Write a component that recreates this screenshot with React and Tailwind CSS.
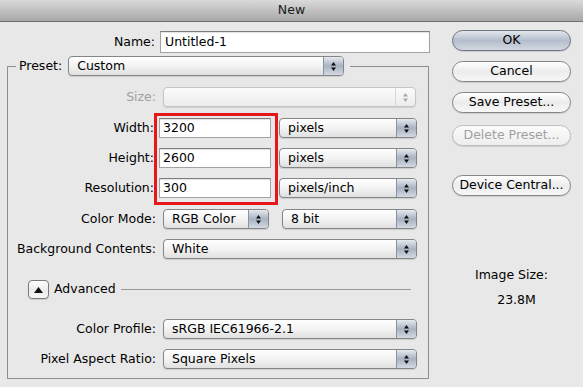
const Arrows = ({ color = "#111" }) => (
  <svg width="7" height="11" viewBox="0 0 7 11">
    <path d="M3.5 1 L6 4.5 H1 Z" fill={color} />
    <path d="M1 6.5 H6 L3.5 10 Z" fill={color} />
  </svg>
);

const Popup = ({ value, width, disabled }) => (
  <div
    className={`flex h-[20px] shrink-0 rounded-[4px] border shadow-[0_1px_1px_rgba(0,0,0,0.12)] ${
      disabled
        ? "border-[#c6c6c6] bg-gradient-to-b from-[#fbfbfb] to-[#ececec]"
        : "border-[#858585] bg-gradient-to-b from-white via-[#f3f3f3] to-[#e0e0e0]"
    }`}
    style={{ width }}
  >
    <span className="flex-1 truncate pl-[8px] leading-[18px]">{value}</span>
    {disabled ? (
      <span className="flex w-[20px] items-center justify-center border-l border-[#d6d6d6]">
        <Arrows color="#a8a8a8" />
      </span>
    ) : (
      <span className="flex w-[20px] items-center justify-center rounded-r-[3px] border-l border-[#8a93a1] bg-gradient-to-b from-[#e6eaf0] via-[#a8b2c1] to-[#d4dae3]">
        <Arrows />
      </span>
    )}
  </div>
);

const Field = ({ value, width, pad = "pl-[3px]" }) => (
  <div
    className={`h-[20px] shrink-0 border border-[#a3a3a3] border-t-[#7d7d7d] bg-white leading-[18px] shadow-[inset_0_1px_1px_rgba(0,0,0,0.12)] ${pad}`}
    style={{ width }}
  >
    {value}
  </div>
);

const Row = ({ label, dim, className = "", children }) => (
  <div className={`flex h-[20px] items-center ${className}`}>
    <span className={`w-[148px] shrink-0 text-right ${dim ? "text-[#a0a0a0]" : ""}`}>{label}</span>
    <div className="ml-[7px] flex items-center gap-[13px]">{children}</div>
  </div>
);

const Button = ({ children, primary, disabled, className = "" }) => (
  <div
    className={`flex h-[21px] w-[119px] items-center justify-center rounded-full border shadow-[0_1px_1px_rgba(0,0,0,0.12)] ${
      primary
        ? "border-[#6c7480] bg-gradient-to-b from-[#e3e7ed] via-[#b3bdcb] to-[#d2d8e1]"
        : disabled
        ? "border-[#bdbdbd] bg-gradient-to-b from-[#fbfbfb] to-[#eeeeee] text-[#a0a0a0]"
        : "border-[#858585] bg-gradient-to-b from-white via-[#ececec] to-[#f7f7f7]"
    } ${className}`}
  >
    {children}
  </div>
);

export default function App() {
  return (
    <div className="h-[387px] w-[583px] overflow-hidden bg-[#e8e8e8] font-['DejaVu_Sans',sans-serif] text-[12.5px] text-black">
      <div className="flex h-[22px] items-center justify-center border-b border-[#6f6f6f] bg-gradient-to-b from-[#dadada] to-[#a8a8a8] text-[12.5px] text-[#1a1a1a]">
        New
      </div>

      <div className="flex">
        <div className="pl-[7px]">
          <div className="mt-[9px] flex h-[22px] items-center">
            <span className="w-[148px] shrink-0 text-right">Name:</span>
            <span className="ml-[5px]">
              <Field value="Untitled-1" width={270} pad="pl-[4px] leading-[20px] h-[22px]" />
            </span>
          </div>

          <fieldset className="mt-[3px] w-[422px] border border-[#8f8f8f] pb-[9px]">
            <legend className="ml-[8px] flex items-center pl-[3px] pr-[6px]">
              <span>Preset:</span>
              <span className="ml-[6px]">
                <Popup value="Custom" width={276} />
              </span>
            </legend>

            <Row label="Size:" dim className="mt-[11px]">
              <Popup value="" width={253} disabled />
            </Row>

            <div className="mt-[6px] flex">
              <div className="flex w-[146px] shrink-0 flex-col gap-[10px] pt-[5px] text-right">
                <span className="leading-[20px]">Width:</span>
                <span className="leading-[20px]">Height:</span>
                <span className="leading-[20px]">Resolution:</span>
              </div>
              <div className="flex flex-col gap-[10px] border-[3px] border-[#e6161b] pt-[2px] pr-[4px] pb-[4px] pl-[2px]">
                <Field value="3200" width={112} />
                <Field value="2600" width={112} />
                <Field value="300" width={112} />
              </div>
              <div className="ml-[1px] flex flex-col gap-[10px] pt-[5px]">
                <Popup value="pixels" width={138} />
                <Popup value="pixels" width={138} />
                <Popup value="pixels/inch" width={138} />
              </div>
            </div>

            <Row label="Color Mode:" className="mt-[4px]">
              <Popup value="RGB Color" width={106} />
              <Popup value="8 bit" width={135} />
            </Row>

            <Row label="Background Contents:" className="mt-[10px]">
              <Popup value="White" width={254} />
            </Row>

            <div className="mt-[21px] flex h-[19px] items-center pl-[20px]">
              <div className="flex h-[19px] w-[21px] items-center justify-center rounded-[4px] border border-[#7a7a7a] bg-gradient-to-b from-white via-[#ececec] to-[#f5f5f5] shadow-[0_1px_1px_rgba(0,0,0,0.12)]">
                <svg width="9" height="6" viewBox="0 0 9 6">
                  <path d="M4.5 0 L9 6 H0 Z" fill="#111" />
                </svg>
              </div>
              <span className="ml-[5px]">Advanced</span>
              <div className="ml-[5px] mr-[17px] h-px flex-1 bg-[#9a9a9a]" />
            </div>

            <Row label="Color Profile:" className="mt-[20px]">
              <Popup value="sRGB IEC61966-2.1" width={254} />
            </Row>

            <Row label="Pixel Aspect Ratio:" className="mt-[10px]">
              <Popup value="Square Pixels" width={254} />
            </Row>
          </fieldset>
        </div>

        <div className="ml-[22px] flex w-[119px] flex-col items-center">
          <Button primary className="mt-[8px]">OK</Button>
          <Button className="mt-[10px]">Cancel</Button>
          <Button className="mt-[10px]">Save Preset...</Button>
          <Button disabled className="mt-[12px]">Delete Preset...</Button>
          <Button className="mt-[29px]">Device Central...</Button>

          <div className="mt-[71px] text-center leading-[16px]">Image Size:</div>
          <div className="mt-[9px] pl-[10px] text-center leading-[16px]">23.8M</div>
        </div>
      </div>
    </div>
  );
}
